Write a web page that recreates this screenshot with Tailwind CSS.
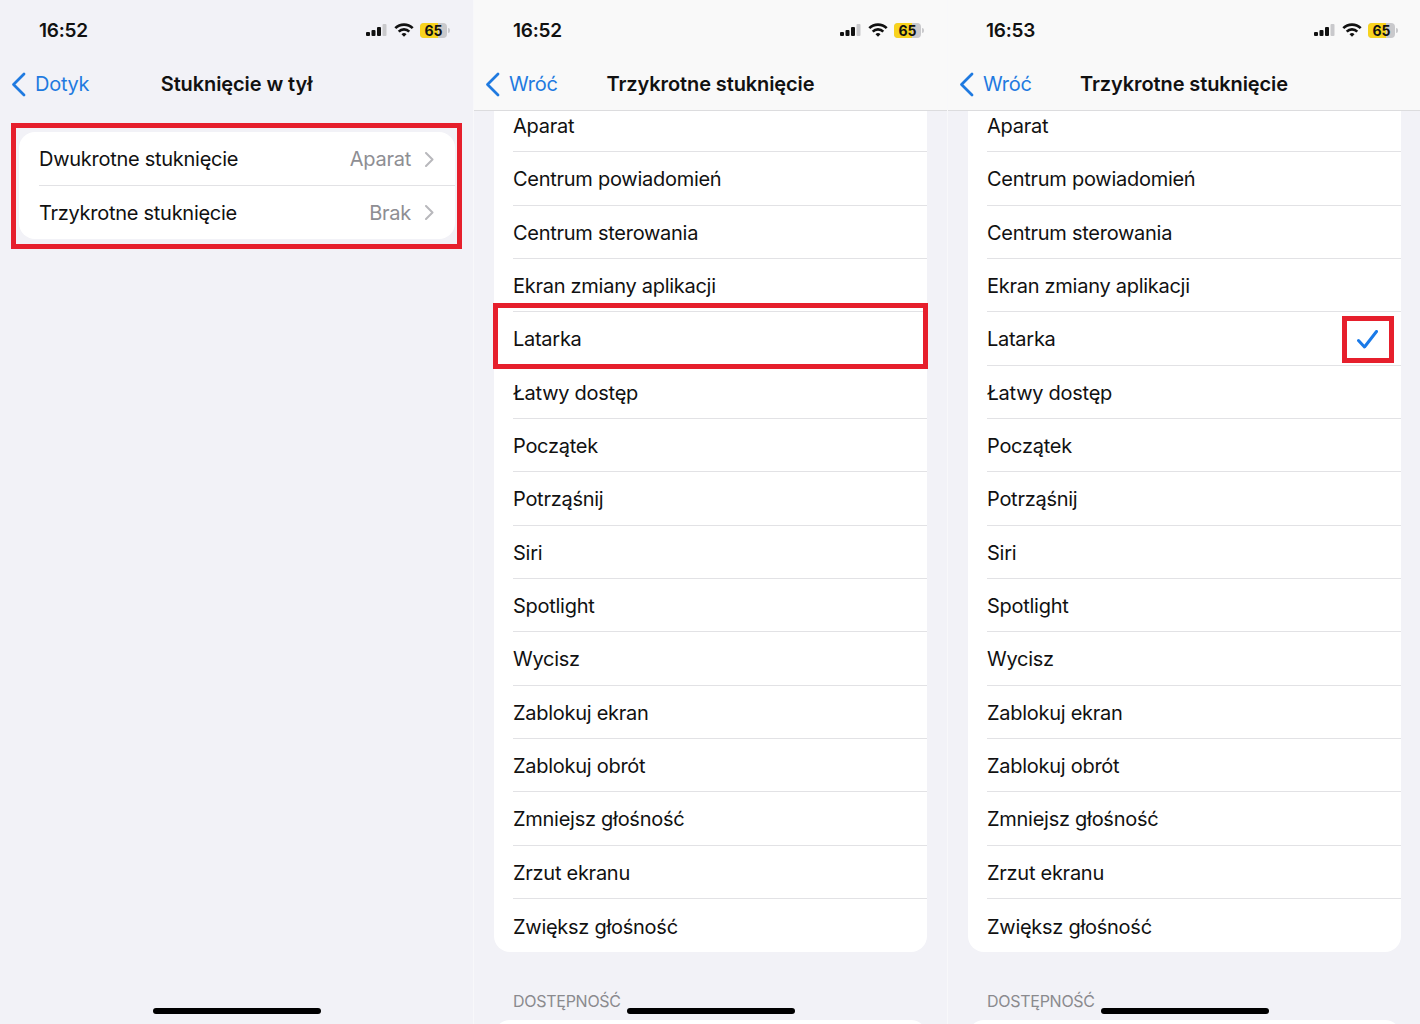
<!DOCTYPE html>
<html lang="pl">
<head>
<meta charset="utf-8">
<script src="https://cdn.jsdelivr.net/npm/@tailwindcss/browser@4"></script>
<title>Stuknięcie w tył</title>
</head>
<body class="bg-white">
<div class="w-[1420px] h-[1024px] overflow-hidden grid grid-cols-[473px_473px_472px] gap-x-px bg-[#f8f8fa] font-['Inter',sans-serif] text-[20px] text-[#111] tracking-[-0.27px]">

<!-- Panel 1 -->
<section class="relative h-[1024px] overflow-hidden bg-[#f2f2f7] flex flex-col">
  <div class="h-[59px] pt-[1px] flex items-center justify-between pl-[39px] pr-[23px]">
    <span class="pt-[2px] text-[19px] leading-[24px] font-semibold tracking-[-0.25px]">16:52</span>
    <div class="flex items-center gap-[7px]">
      <svg width="21" height="12" viewBox="0 0 21 12"><rect x="0" y="8" width="4" height="4" rx="1" fill="#111"/><rect x="5.500" y="6" width="4" height="6" rx="1" fill="#111"/><rect x="11" y="3" width="4" height="9" rx="1" fill="#111"/><rect x="16.500" y="0" width="4" height="12" rx="1" fill="#c9c9cc"/></svg>
      <svg class="-mr-px" width="20" height="14" viewBox="0 0 20 14" fill="none" stroke="#111" stroke-width="2.600"><path d="M1.300 5.200a12.300 12.300 0 0 1 17.400 0"/><path d="M4.700 8.600a7.500 7.500 0 0 1 10.600 0"/><path d="M10 13.800l-2.500-2.600a3.500 3.500 0 0 1 5 0z" fill="#111" stroke="none"/></svg>
      <div class="relative w-[27px] h-[15px] rounded-[4px] bg-[#c9c9cc] overflow-hidden"><div class="absolute inset-y-0 left-0 w-[18px] bg-[#f8d31e]"></div><span class="absolute inset-0 text-center text-[14px] leading-[15px] font-bold tracking-normal">65</span></div>
      <div class="w-[2px] h-[5px] -ml-[6px] bg-[#c9c9cc] rounded-r"></div>
    </div>
  </div>
  <div class="relative h-[51px] pb-[2px] flex items-center justify-center">
    <div class="absolute left-[11px] top-[10px] flex items-center gap-[9px] text-[#1f7ae0]">
      <svg width="15" height="25" viewBox="0 0 15 25" fill="none" stroke="#1f7ae0" stroke-width="2.800" stroke-linecap="round" stroke-linejoin="round"><path d="M13 2L2.500 12.500 13 23"/></svg>
      <span>Dotyk</span>
    </div>
    <h1 class="font-semibold text-[20px] tracking-[-0.1px]">Stuknięcie w tył</h1>
  </div>
  <div class="mt-[22px] ml-[19px] mr-[18px] rounded-[16px] bg-white">
    <div class="h-[53px] pl-[20px] pr-[21px] pt-[1px] flex items-center justify-between"><span>Dwukrotne stuknięcie</span><span class="flex items-center gap-[14px] text-[#8e8e93]">Aparat<svg width="9" height="15" viewBox="0 0 9 15" fill="none" stroke="#b8b8bc" stroke-width="2" stroke-linecap="round" stroke-linejoin="round"><path d="M1 1l6.500 6.500L1 14"/></svg></span></div>
    <div class="h-px ml-[20px] bg-[#e2e2e5]"></div>
    <div class="h-[53px] pl-[20px] pr-[21px] flex items-center justify-between"><span>Trzykrotne stuknięcie</span><span class="flex items-center gap-[14px] text-[#8e8e93]">Brak<svg width="9" height="15" viewBox="0 0 9 15" fill="none" stroke="#b8b8bc" stroke-width="2" stroke-linecap="round" stroke-linejoin="round"><path d="M1 1l6.500 6.500L1 14"/></svg></span></div>
  </div>
  <div class="absolute left-[11px] top-[123px] w-[451px] h-[126px] border-[5px] border-[#e61f2c]"></div>
  <div class="absolute left-[153px] top-[1008px] w-[168px] h-[6px] rounded-full bg-black"></div>
</section>

<!-- Panel 2 -->
<section class="relative h-[1024px] overflow-hidden bg-[#f2f2f7] flex flex-col">
  <div class="relative z-10 bg-[#f9f9f9] border-b border-[#dcdcde] shrink-0">
    <div class="h-[59px] pt-[1px] flex items-center justify-between pl-[39px] pr-[23px]">
      <span class="pt-[2px] text-[19px] leading-[24px] font-semibold tracking-[-0.25px]">16:52</span>
      <div class="flex items-center gap-[7px]">
        <svg width="21" height="12" viewBox="0 0 21 12"><rect x="0" y="8" width="4" height="4" rx="1" fill="#111"/><rect x="5.500" y="6" width="4" height="6" rx="1" fill="#111"/><rect x="11" y="3" width="4" height="9" rx="1" fill="#111"/><rect x="16.500" y="0" width="4" height="12" rx="1" fill="#c9c9cc"/></svg>
        <svg class="-mr-px" width="20" height="14" viewBox="0 0 20 14" fill="none" stroke="#111" stroke-width="2.600"><path d="M1.300 5.200a12.300 12.300 0 0 1 17.400 0"/><path d="M4.700 8.600a7.500 7.500 0 0 1 10.600 0"/><path d="M10 13.800l-2.500-2.600a3.500 3.500 0 0 1 5 0z" fill="#111" stroke="none"/></svg>
        <div class="relative w-[27px] h-[15px] rounded-[4px] bg-[#c9c9cc] overflow-hidden"><div class="absolute inset-y-0 left-0 w-[18px] bg-[#f8d31e]"></div><span class="absolute inset-0 text-center text-[14px] leading-[15px] font-bold tracking-normal">65</span></div>
        <div class="w-[2px] h-[5px] -ml-[6px] bg-[#c9c9cc] rounded-r"></div>
      </div>
    </div>
    <div class="relative h-[51px] pb-[2px] flex items-center justify-center">
      <div class="absolute left-[11px] top-[10px] flex items-center gap-[9px] text-[#1f7ae0]">
        <svg width="15" height="25" viewBox="0 0 15 25" fill="none" stroke="#1f7ae0" stroke-width="2.800" stroke-linecap="round" stroke-linejoin="round"><path d="M13 2L2.500 12.500 13 23"/></svg>
        <span>Wróć</span>
      </div>
      <h1 class="font-semibold text-[20px] tracking-[-0.1px]">Trzykrotne stuknięcie</h1>
    </div>
  </div>
  <div class="-mt-[12px]">
    <div class="mx-[20px] w-[433px] rounded-b-[16px] bg-white pl-[19px] divide-y divide-[#e2e2e5]">
      <div class="h-[53.330px] pt-[2px] flex items-center">Aparat</div>
      <div class="h-[53.330px] pt-[2px] flex items-center">Centrum powiadomień</div>
      <div class="h-[53.330px] pt-[2px] flex items-center">Centrum sterowania</div>
      <div class="h-[53.330px] pt-[2px] flex items-center">Ekran zmiany aplikacji</div>
      <div class="h-[53.330px] pt-[2px] flex items-center">Latarka</div>
      <div class="h-[53.330px] pt-[2px] flex items-center">Łatwy dostęp</div>
      <div class="h-[53.330px] pt-[2px] flex items-center">Początek</div>
      <div class="h-[53.330px] pt-[2px] flex items-center">Potrząśnij</div>
      <div class="h-[53.330px] pt-[2px] flex items-center">Siri</div>
      <div class="h-[53.330px] pt-[2px] flex items-center">Spotlight</div>
      <div class="h-[53.330px] pt-[2px] flex items-center">Wycisz</div>
      <div class="h-[53.330px] pt-[2px] flex items-center">Zablokuj ekran</div>
      <div class="h-[53.330px] pt-[2px] flex items-center">Zablokuj obrót</div>
      <div class="h-[53.330px] pt-[2px] flex items-center">Zmniejsz głośność</div>
      <div class="h-[53.330px] pt-[2px] flex items-center">Zrzut ekranu</div>
      <div class="h-[53.330px] pt-[2px] flex items-center">Zwiększ głośność</div>
    </div>
    <p class="mt-[38px] pl-[39px] text-[16px] leading-[22px] text-[#8a8a8e]">DOSTĘPNOŚĆ</p>
    <div class="mt-[8px] mx-[20px] w-[433px] h-[40px] rounded-[16px] bg-white"></div>
  </div>
  <div class="absolute left-[19px] top-[303px] w-[435px] h-[66px] border-[5px] border-[#e61f2c]"></div>
  <div class="absolute left-[153px] top-[1008px] w-[168px] h-[6px] rounded-full bg-black"></div>
</section>

<!-- Panel 3 -->
<section class="relative h-[1024px] overflow-hidden bg-[#f2f2f7] flex flex-col">
  <div class="relative z-10 bg-[#f9f9f9] border-b border-[#dcdcde] shrink-0">
    <div class="h-[59px] pt-[1px] flex items-center justify-between pl-[38px] pr-[22px]">
      <span class="pt-[2px] text-[19px] leading-[24px] font-semibold tracking-[-0.25px]">16:53</span>
      <div class="flex items-center gap-[7px]">
        <svg width="21" height="12" viewBox="0 0 21 12"><rect x="0" y="8" width="4" height="4" rx="1" fill="#111"/><rect x="5.500" y="6" width="4" height="6" rx="1" fill="#111"/><rect x="11" y="3" width="4" height="9" rx="1" fill="#111"/><rect x="16.500" y="0" width="4" height="12" rx="1" fill="#c9c9cc"/></svg>
        <svg class="-mr-px" width="20" height="14" viewBox="0 0 20 14" fill="none" stroke="#111" stroke-width="2.600"><path d="M1.300 5.200a12.300 12.300 0 0 1 17.400 0"/><path d="M4.700 8.600a7.500 7.500 0 0 1 10.600 0"/><path d="M10 13.800l-2.500-2.600a3.500 3.500 0 0 1 5 0z" fill="#111" stroke="none"/></svg>
        <div class="relative w-[27px] h-[15px] rounded-[4px] bg-[#c9c9cc] overflow-hidden"><div class="absolute inset-y-0 left-0 w-[18px] bg-[#f8d31e]"></div><span class="absolute inset-0 text-center text-[14px] leading-[15px] font-bold tracking-normal">65</span></div>
        <div class="w-[2px] h-[5px] -ml-[6px] bg-[#c9c9cc] rounded-r"></div>
      </div>
    </div>
    <div class="relative h-[51px] pb-[2px] flex items-center justify-center">
      <div class="absolute left-[11px] top-[10px] flex items-center gap-[9px] text-[#1f7ae0]">
        <svg width="15" height="25" viewBox="0 0 15 25" fill="none" stroke="#1f7ae0" stroke-width="2.800" stroke-linecap="round" stroke-linejoin="round"><path d="M13 2L2.500 12.500 13 23"/></svg>
        <span>Wróć</span>
      </div>
      <h1 class="font-semibold text-[20px] tracking-[-0.1px]">Trzykrotne stuknięcie</h1>
    </div>
  </div>
  <div class="-mt-[12px]">
    <div class="mx-[20px] w-[433px] rounded-b-[16px] bg-white pl-[19px] divide-y divide-[#e2e2e5]">
      <div class="h-[53.330px] pt-[2px] flex items-center">Aparat</div>
      <div class="h-[53.330px] pt-[2px] flex items-center">Centrum powiadomień</div>
      <div class="h-[53.330px] pt-[2px] flex items-center">Centrum sterowania</div>
      <div class="h-[53.330px] pt-[2px] flex items-center">Ekran zmiany aplikacji</div>
      <div class="h-[53.330px] pt-[2px] flex items-center justify-between pr-[23px]"><span>Latarka</span><svg width="21" height="19" viewBox="0 0 21 19" fill="none" stroke="#1a7ae8" stroke-width="3" stroke-linecap="round" stroke-linejoin="round"><path d="M1.500 10.500L7.500 17 19.500 1.500"/></svg></div>
      <div class="h-[53.330px] pt-[2px] flex items-center">Łatwy dostęp</div>
      <div class="h-[53.330px] pt-[2px] flex items-center">Początek</div>
      <div class="h-[53.330px] pt-[2px] flex items-center">Potrząśnij</div>
      <div class="h-[53.330px] pt-[2px] flex items-center">Siri</div>
      <div class="h-[53.330px] pt-[2px] flex items-center">Spotlight</div>
      <div class="h-[53.330px] pt-[2px] flex items-center">Wycisz</div>
      <div class="h-[53.330px] pt-[2px] flex items-center">Zablokuj ekran</div>
      <div class="h-[53.330px] pt-[2px] flex items-center">Zablokuj obrót</div>
      <div class="h-[53.330px] pt-[2px] flex items-center">Zmniejsz głośność</div>
      <div class="h-[53.330px] pt-[2px] flex items-center">Zrzut ekranu</div>
      <div class="h-[53.330px] pt-[2px] flex items-center">Zwiększ głośność</div>
    </div>
    <p class="mt-[38px] pl-[39px] text-[16px] leading-[22px] text-[#8a8a8e]">DOSTĘPNOŚĆ</p>
    <div class="mt-[8px] mx-[20px] w-[433px] h-[40px] rounded-[16px] bg-white"></div>
  </div>
  <div class="absolute left-[394px] top-[316px] w-[52px] h-[47px] border-[5px] border-[#e61f2c]"></div>
  <div class="absolute left-[153px] top-[1008px] w-[168px] h-[6px] rounded-full bg-black"></div>
</section>
</div>
</body>
</html>
